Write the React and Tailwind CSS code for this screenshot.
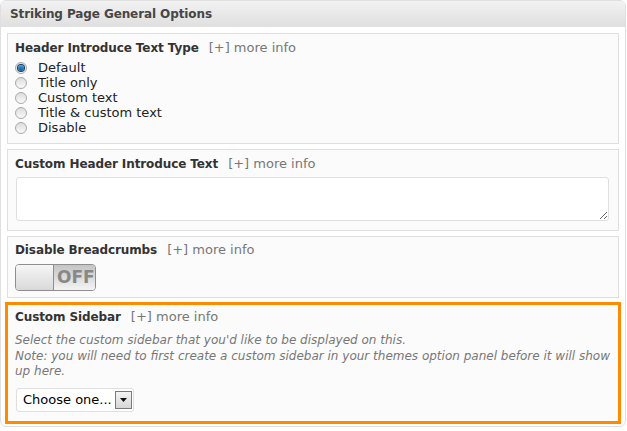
import React from 'react'

const options = ['Default', 'Title only', 'Custom text', 'Title & custom text', 'Disable']

function Label({ title }){
  return (
    <div className="flex items-center h-[16px]">
      <span className="font-bold text-[12px] text-[#333] tracking-[-0.1px]">{title}</span>
      <span className="ml-[10px] text-[13px] text-[#777]">[+] more info</span>
    </div>
  )
}

function Radio({ checked }){
  return (
    <span className="w-[12px] h-[12px] rounded-full border border-[#a9a9a9] bg-gradient-to-b from-[#dcdcdc] to-[#fafafa] flex items-center justify-center">
      {checked && <span className="w-[6px] h-[6px] rounded-full bg-gradient-to-b from-[#4b9bd0] to-[#0d5a94] ring-1 ring-[#0b3d66]" />}
    </span>
  )
}

export default function App(){
  return (
    <div className="w-[626px] h-[427px] bg-white border border-[#dfdfdf] rounded-[6px] overflow-hidden text-[#333]" style={{ fontFamily: '"DejaVu Sans", Verdana, sans-serif' }}>
      <div className="h-[26px] bg-gradient-to-b from-[#f2f2f2] to-[#dfdfdf] flex items-center px-[9px]">
        <span className="font-bold text-[12px] text-[#464646] tracking-[-0.1px]">Striking Page General Options</span>
      </div>

      <div className="flex flex-col gap-[5px] pt-[6px] mx-[6px]">
        <div className="h-[111px] bg-[#fbfbfb] border border-[#dfdfdf] px-[7px] pt-[6px]">
          <Label title="Header Introduce Text Type" />
          <div className="flex flex-col mt-[4px]">
            {options.map((o, i) => (
              <label key={o} className="flex items-center h-[15px] text-[13px] text-[#222]">
                <span className="w-[23px]"><Radio checked={i === 0} /></span>
                {o}
              </label>
            ))}
          </div>
        </div>

        <div className="h-[82px] bg-[#fbfbfb] border border-[#dfdfdf] px-[7px] pt-[6px]">
          <Label title="Custom Header Introduce Text" />
          <textarea className="mt-[5px] ml-[1px] block w-[593px] h-[44px] bg-white border border-[#dfdfdf] rounded-[3px]" />
        </div>

        <div className="h-[62px] bg-[#fbfbfb] border border-[#dfdfdf] px-[7px] pt-[5px]">
          <Label title="Disable Breadcrumbs" />
          <div className="mt-[6px] w-[81px] h-[27px] border border-[#8e8e8e] rounded-[4px] flex overflow-hidden">
            <div className="w-[38px] bg-gradient-to-b from-[#f6f6f6] to-[#d9d9d9] border-r border-[#8e8e8e]" />
            <div className="flex-1 bg-gradient-to-b from-[#c4c4c4] to-[#f4f4f4] flex items-center pl-[3px] text-[17px] font-bold text-[#888]">OFF</div>
          </div>
        </div>

        <div className="h-[118px] mt-[1px] bg-[#fbfbfb] border border-[#ff8a00] outline-2 outline-[#ff8a00] px-[7px] pt-[4px]">
          <Label title="Custom Sidebar" />
          <div className="mt-[8px] italic text-[12px] leading-[15.5px] text-[#777]">
            Select the custom sidebar that you'd like to be displayed on this.<br />
            Note: you will need to first create a custom sidebar in your themes option panel before it will show up here.
          </div>
          <div className="mt-[8px] ml-[1px] w-[118px] h-[24px] bg-white border border-[#dfdfdf] rounded-[3px] flex items-center pl-[6px] pr-[1px]">
            <span className="text-[13px] text-black flex-1">Choose one...</span>
            <span className="w-[17px] h-[18px] border border-[#7a7a7a] bg-gradient-to-b from-[#f4f4f4] to-[#d6d6d6] flex items-center justify-center">
              <svg width="7" height="4" viewBox="0 0 7 4"><path d="M0 0h7L3.5 4z" fill="#111" /></svg>
            </span>
          </div>
        </div>
      </div>
    </div>
  )
}
